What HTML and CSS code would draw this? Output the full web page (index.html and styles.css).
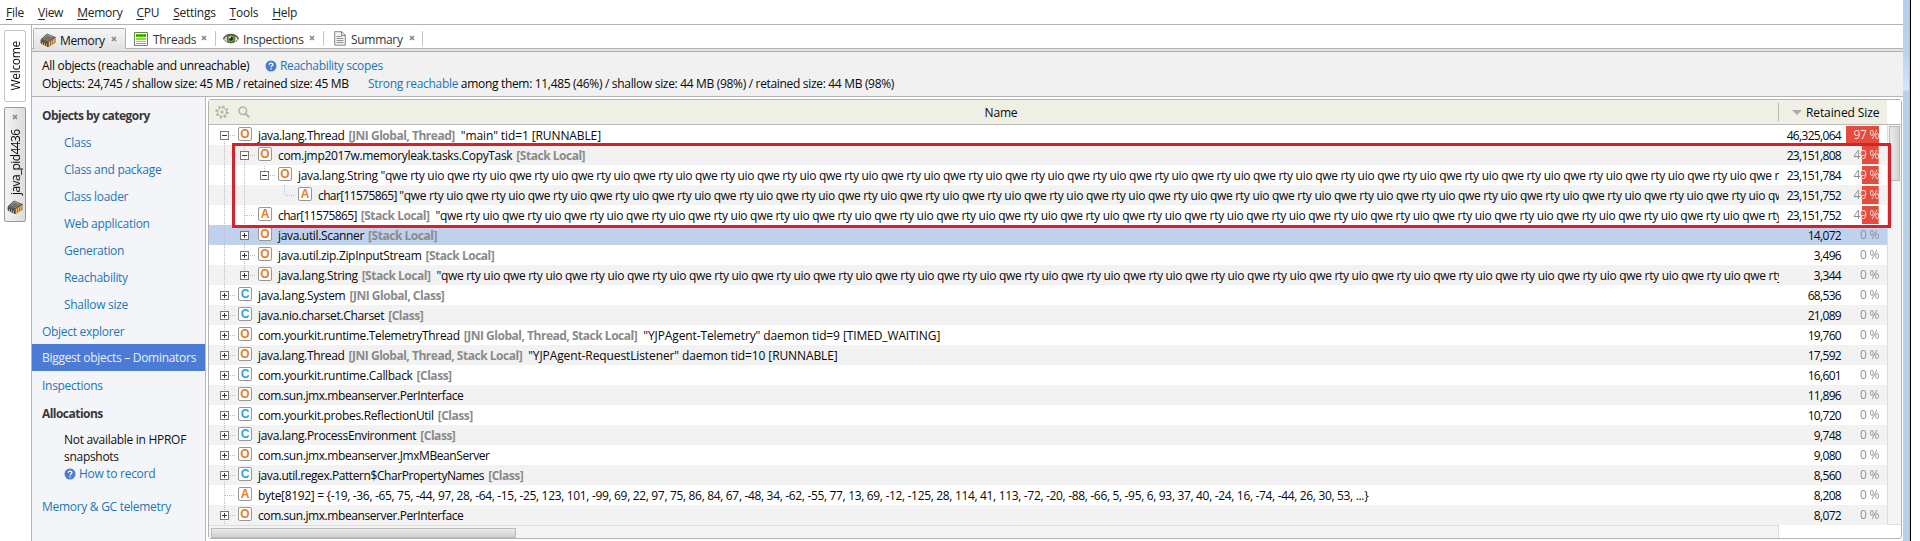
FILE: index.html
```html
<!DOCTYPE html>
<html lang="en">
<head>
<meta charset="utf-8">
<title>Memory snapshot</title>
<link rel="stylesheet" href="styles.css">
</head>
<body>
<svg class="defs" width="0" height="0">
  <symbol id="chip" viewBox="0 0 16 16">
    <path d="M.5 8 7 2l8 3.500.5 4-7.500 5.500L.5 11z" fill="#6b6865"/>
    <path d="M1 7.500 7 2l8.500 3.500L8 10z" fill="#77736f" stroke="#4a4744" stroke-width=".7"/>
    <path d="M4.500 5.500 7.500 3l5 2" fill="none" stroke="#a5a19c" stroke-width="1"/>
    <path d="M8 10l7.500-4.500v5L8.500 15z" fill="#8a5a2a"/>
    <path d="M9.500 9.500v4.500M11.500 8.500v4.200M13.400 7.300v4.200M15 6.300v3.700" stroke="#f0b96a" stroke-width="1.200"/>
    <path d="M1 8.500 8 11v4L1 11.500z" fill="#4c4743"/>
    <path d="M2.500 10v2.300M4.500 10.700v2.600M6.500 11.500v2.600" stroke="#e0a050" stroke-width="1"/>
  </symbol>
  <symbol id="cross" viewBox="0 0 6 6"><path d="M1 1 5 5M5 1 1 5" stroke="#8a8a8a" stroke-width="1.700"/></symbol>
  <symbol id="help" viewBox="0 0 12 12">
    <circle cx="6" cy="6" r="5.500" fill="#4c7bd3"/>
    <path d="M4.200 4.700C4.200 2.500 7.900 2.500 7.900 4.600 7.900 5.900 6.100 5.800 6.100 7.300M6.100 8.200V9.500" fill="none" stroke="#fff" stroke-width="1.300"/>
  </symbol>
</svg>
<div class="app">
  <nav class="menu"><span><u>F</u>ile</span><span><u>V</u>iew</span><span><u>M</u>emory</span><span><u>C</u>PU</span><span><u>S</u>ettings</span><span><u>T</u>ools</span><span><u>H</u>elp</span></nav>
  <div class="work">
    <div class="rail">
      <div class="vtab welcome"><span>Welcome</span></div>
      <div class="vtab current"><svg class="x"><use href="#cross"/></svg><span>java_pid4436</span><svg class="chip"><use href="#chip"/></svg></div>
    </div>
    <main class="main">
      <div class="tabs">
        <div class="tab active"><svg width="16" height="16"><use href="#chip"/></svg><span>Memory</span><svg class="x"><use href="#cross"/></svg></div>
        <div class="tab threads">
          <svg width="14" height="14" viewBox="0 0 14 14"><path fill="#fff" stroke="#6f7f62" d="M.5.5h13v13H.5z"/><path fill="#52c800" d="M2 2h10v3H2z"/><path fill="#8fe02a" d="M2 6h10v2H2zM2 9h10v1H2z"/><path fill="#5fc916" d="M2 11h10v1H2z"/><path stroke="#2f8f00" stroke-dasharray="3 1" d="M2 3.500h10"/></svg>
          <span>Threads</span><svg class="x"><use href="#cross"/></svg></div>
        <div class="tab inspections">
          <svg width="16" height="14" viewBox="0 0 16 14"><path d="M.5 7C4 1.500 12 1.500 15.500 7 12 12 4 12 .5 7z" fill="#eef0ec" stroke="#66705c"/><path d="M.5 6.500C4 1 12 1 15.500 6.500" fill="none" stroke="#4f5a48" stroke-width="1.400"/><circle cx="8" cy="6.800" r="4" fill="#7a9a4e" stroke="#4b6431"/><circle cx="8" cy="6.800" r="2" fill="#1d2a14"/><circle cx="7" cy="5.500" r=".9" fill="#fff"/></svg>
          <span>Inspections</span><svg class="x"><use href="#cross"/></svg></div>
        <div class="tab summary">
          <svg width="12" height="15" viewBox="0 0 12 15"><path d="M.7.7h7.100l3.500 3.500v10H.7z" fill="#f3f3f3" stroke="#858585"/><path d="M7.500.7v3.800h3.800" fill="none" stroke="#858585"/><path d="M2.500 5.500h5M2.500 7.500h7M2.500 9.500h7M2.500 11.500h7" stroke="#929292"/></svg>
          <span>Summary</span><svg class="x"><use href="#cross"/></svg></div>
      </div>
      <div class="info">
        <div class="line"><span class="l1">All objects (reachable and unreachable)</span><svg class="help"><use href="#help"/></svg><a>Reachability scopes</a></div>
        <div class="line"><span class="l2">Objects: 24,745 / shallow size: 45 MB / retained size: 45 MB</span><span class="l3"><a>Strong reachable</a> among them: 11,485 (46%) / shallow size: 44 MB (98%) / retained size: 44 MB (98%)</span></div>
      </div>
      <div class="content">
        <aside class="side">
          <b>Objects by category</b>
          <a class="sub">Class</a><a class="sub">Class and package</a><a class="sub">Class loader</a><a class="sub">Web application</a><a class="sub">Generation</a><a class="sub">Reachability</a><a class="sub">Shallow size</a>
          <a class="explorer">Object explorer</a>
          <a class="selected">Biggest objects – Dominators</a>
          <a class="insp">Inspections</a>
          <b>Allocations</b>
          <p>Not available in HPROF snapshots</p>
          <a class="record"><svg class="help"><use href="#help"/></svg>How to record</a>
          <a class="gc">Memory &amp; GC telemetry</a>
        </aside>
        <section class="panel">
          <header class="thead">
            <svg class="gear" width="14" height="14" viewBox="0 0 14 14"><g fill="none" stroke="#aaa9a0"><circle cx="7" cy="7" r="4.400"/><circle cx="7" cy="7" r="5.800" stroke-width="1.600" stroke-dasharray="2 2.555"/><circle cx="7" cy="7" r="1.200"/></g></svg>
            <svg class="search" width="12" height="12" viewBox="0 0 12 12"><g fill="none" stroke="#b3b2aa"><circle cx="4.800" cy="4.800" r="3.800" stroke-width="1.500"/><path d="m7.600 7.600 3.600 3.600" stroke-width="2"/></g></svg>
            <span class="hname">Name</span>
            <span class="hsize"><i></i><span>Retained Size</span></span>
          </header>
          <div class="tbody"><div class="rows" id="rows"></div><div class="vscroll"><div class="vthumb"></div></div></div>
          <div class="hscroll"><div class="htrack"><div class="hthumb"></div></div></div>
          <div class="mark"></div>
        </section>
      </div>
    </main>
  </div>
</div>
<div class="edge"></div>
<script src="rows.js"></script>
</body>
</html>
```

FILE: styles.css
```css
* { box-sizing: border-box; }
body {
  margin: 0; width: 1920px; height: 541px; overflow: hidden; display: flex;
  background: #fff; color: #080808;
  font: 12px/20px "Open Sans", "Noto Sans", sans-serif;
  letter-spacing: -.33px; white-space: nowrap;
}
.defs { position: absolute; }
svg { display: block; flex: none; }
a { color: #1b75bc; }
.app { width: 1903px; display: flex; flex-direction: column; }
.edge {
  width: 8px; border-right: 1px solid #000;
  background: linear-gradient(90deg, transparent 6px, #6fdcf0 6px), linear-gradient(#b4cfe9, #b8d3ec 50px, #d5e6f6 90px, #b9d0ea 91px);
}
.menu { height: 25px; border-bottom: 1px solid #b4b4b4; padding: 3px 0 0 6px; display: flex; gap: 14px; color: #222; letter-spacing: -.26px; }
.menu u { text-underline-offset: 2px; }
.work { flex: 1; display: flex; min-height: 0; }

/* vertical snapshot tabs */
.rail { width: 31px; padding: 5px 0 0 4px; display: flex; flex-direction: column; gap: 5px; }
.vtab { width: 22px; border: 1px solid #c6c6c6; border-radius: 2px; display: flex; flex-direction: column; align-items: center; }
.vtab span { writing-mode: vertical-rl; transform: rotate(180deg); line-height: 20px; padding-right: 2px; }
.welcome { height: 72px; justify-content: center; letter-spacing: -.3px; }
.current { height: 115px; padding-top: 6px; background: linear-gradient(90deg, #f4f4f4, #dcdcdc); border-color: #999; letter-spacing: -.6px; }
.current span { height: 68px; margin: 7px 0 4px; }
.x { width: 6px; height: 6px; }
.chip { width: 16px; height: 16px; }

.main { flex: 1; min-width: 0; border-left: 1px solid #b4b4b4; display: flex; flex-direction: column; }
.tabs { height: 27px; padding: 3px 0 0 1px; display: flex; background: linear-gradient(#fff 23px, #b5b5b5 23px, #b5b5b5 24px, #e2e2e2 24px, #e2e2e2 26px, #b0b0b0 26px); }
.tab { height: 20px; display: flex; align-items: center; color: #333; letter-spacing: -.3px; }
.tab .x { margin-top: -2px; }
.tab span { padding-top: 2px; }
.active { width: 93px; height: 21px; border: 1px solid #b0b0b0; border-bottom: 0; border-radius: 2px 2px 0 0; padding: 1px 0 0 6px; background: linear-gradient(#f6f6f6, #e2e2e2); color: #111; }
.active span { width: 55px; padding-left: 4px; letter-spacing: -.36px; }
.tab:not(.active) { border-right: 1px solid #c4c4c4; margin-top: 3px; height: 15px; }
.threads { width: 90px; padding-left: 8px; }
.threads span { width: 53px; padding-left: 5px; }
.inspections { width: 108px; padding-left: 7px; }
.inspections span { width: 70px; padding-left: 4px; }
.summary { width: 99px; padding-left: 10px; }
.summary span { width: 63px; padding-left: 5px; }

.info { height: 45px; padding: 5px 0 0 10px; background: #f1f1f1; border-bottom: 1px solid #b4b4b4; line-height: 18px; letter-spacing: -.32px; }
.line { display: flex; align-items: center; height: 18px; }
.l1 { width: 223px; }
.l2 { width: 326px; letter-spacing: -.36px; }
.help { width: 12px; height: 12px; margin-right: 3px; }

.content { flex: 1; min-height: 0; display: flex; }
.side { width: 174px; padding-top: 5px; background: #f4f5f9; border-right: 1px solid #b9b9b9; display: flex; flex-direction: column; line-height: 27px; letter-spacing: -.29px; }
.side > * { padding-left: 10px; height: 27px; flex: none; }
.side b { color: #383838; letter-spacing: -.54px; }
.side .sub { padding-left: 32px; }
.side .explorer { height: 26px; line-height: 27px; }
.side .selected { background: #4c7bd6; color: #e9f0fc; }
.side .insp { margin: 1px 0; }
.side b + p { margin: 5px 0 0; }
.side p { padding-left: 32px; height: 33px; line-height: 16.500px; width: 165px; white-space: normal; color: #111; }
.side .record { display: flex; align-items: center; height: 17px; padding-left: 32px; }
.side .gc { margin-top: 11px; }

/* object table */
.panel { position: relative; width: 1694px; height: 440px; margin: 2px 0 0 2px; border: 1px solid #b4b4b4; border-radius: 3px; display: flex; flex-direction: column; }
.thead { height: 25px; display: flex; align-items: center; border-bottom: 1px solid #b9b9b9; background: linear-gradient(90deg, #f0efe3 1678px, #fff 1678px); }
.gear { margin-left: 6px; }
.search { margin-left: 9px; }
.hname { flex: 1; text-align: center; padding: 2px 26px 0 0; letter-spacing: -.2px; }
.hsize { width: 123px; height: 18px; line-height: 18px; border-left: 1px solid #b5b5b5; display: flex; align-items: center; padding-left: 13px; letter-spacing: -.1px; }
.hsize span { padding-top: 2px; }
.hsize i { border: 5px solid transparent; border-top-color: #aaa; border-bottom: 0; margin-right: 4px; }
.tbody { display: flex; height: 400px; }
.rows { width: 1678px; }
.row { display: flex; height: 20px; }
.row:nth-child(even) { background: #f2f2f2; }
.row.sel { background: #c0d1ee; }
.name { width: 1570px; height: 20px; overflow: hidden; display: flex; align-items: center; padding-left: 5px; white-space: pre; }
.name b { color: #8a8a8a; letter-spacing: -.48px; margin-left: 4px; }
.label, .name b, .str { padding-top: 2px; }
.label.tight { letter-spacing: -.42px; }
.label.digits { letter-spacing: -.62px; }
.cell { width: 20px; height: 20px; flex: none; display: flex; align-items: center; justify-content: center; background: repeating-linear-gradient(#bdbdbd 0 1px, transparent 1px 2px) 10px 0 / 1px 20px no-repeat; }
.cell.none { background: none; }
.cell.start { background-position: 10px 10px; }
.cell.end { background-size: 1px 10px; }
.cell.both { background-size: 1px 9px; background-position: 10px -3px; }
.stub { width: 5px; height: 1px; flex: none; margin: 0 0 0 -4px; background: repeating-linear-gradient(90deg, #bdbdbd 0 1px, transparent 1px 2px); }
.stub.long { width: 10px; margin-left: -9px; }
.box { width: 9px; height: 9px; border: 1px solid #777; margin-left: 1px; background: linear-gradient(#333, #333) 1px 3px / 5px 1px no-repeat #fff; }
.box.plus { background: linear-gradient(#333, #333) 1px 3px / 5px 1px no-repeat, linear-gradient(#333, #333) 3px 1px / 1px 5px no-repeat #fff; }
.kind { width: 14px; height: 14px; flex: none; margin: -2px 6px 0 3px; border: 1px solid #979797; border-radius: 2px; background: #fff; font: bold 12px/12px "Liberation Sans", sans-serif; display: flex; justify-content: center; letter-spacing: 0; color: #e8801a; }
.kind.C { color: #28a4e0; }
.str { letter-spacing: -.11px; }
.qwe { letter-spacing: -.293px; }
.gap { margin-left: 6px; }
.size { width: 62px; text-align: right; letter-spacing: -.68px; line-height: 21px; }
.pct { width: 38px; height: 18px; margin-top: 1px; display: flex; justify-content: flex-end; background: linear-gradient(#e64c3c, #e64c3c) right / calc(var(--share) * 34px) 18px no-repeat; }
.pct span { width: 38px; text-align: right; line-height: 17px; letter-spacing: -.3px; color: transparent; background: linear-gradient(270deg, #fff0ee calc(var(--share) * 34px), #8a8a8a calc(var(--share) * 34px)); background-clip: text; -webkit-background-clip: text; }
.vscroll { width: 14px; border-left: 1px solid #ddd; border-bottom: 1px solid #ddd; background: #f4f4f4; padding: 1px 0 0 1px; }
.vthumb { width: 11px; height: 55px; border: 1px solid #bbb; background: linear-gradient(90deg, #ececec, #d2d2d2); }
.hscroll { flex: 1; }
.htrack { width: 1570px; height: 13px; padding: 2px 0 0 2px; border-top: 1px solid #ddd; border-right: 1px solid #ddd; background: #f4f4f4; }
.hthumb { width: 305px; height: 10px; border: 1px solid #bbb; background: linear-gradient(#ececec, #d0d0d0); }
.mark { position: absolute; left: 23px; top: 43px; width: 1659px; height: 85px; border: 3px solid #d8222b; }
```

FILE: rows.js
```js
const qwe = n => '"' + 'qwe rty uio '.repeat(n) + 'qwe rty';
// [depth, tree guides, expander, kind, name, roots, details, size, percent, label class]
const data = [
  [0, 's', '-', 'O', 'java.lang.Thread', '[JNI Global, Thread]', '"main" tid=1 [RUNNABLE]', '46,325,064', 97],
  [1, '||', '-', 'O', 'com.jmp2017w.memoryleak.tasks.CopyTask', '[Stack Local]', '', '23,151,808', 49],
  [2, '||b', '-', 'O', 'java.lang.String', '', qwe(22), '23,151,784', 49],
  [3, '||ne', '', 'A', 'char[11575865]', '', qwe(22), '23,151,752', 49, 'digits'],
  [1, '||', '', 'A', 'char[11575865]', '[Stack Local]', qwe(21), '23,151,752', 49, 'digits'],
  [1, '||', '+', 'O', 'java.util.Scanner', '[Stack Local]', '', '14,072', 0],
  [1, '||', '+', 'O', 'java.util.zip.ZipInputStream', '[Stack Local]', '', '3,496', 0],
  [1, '|e', '+', 'O', 'java.lang.String', '[Stack Local]', qwe(21), '3,344', 0],
  [0, '|', '+', 'C', 'java.lang.System', '[JNI Global, Class]', '', '68,536', 0],
  [0, '|', '+', 'C', 'java.nio.charset.Charset', '[Class]', '', '21,089', 0],
  [0, '|', '+', 'O', 'com.yourkit.runtime.TelemetryThread', '[JNI Global, Thread, Stack Local]', '"YJPAgent-Telemetry" daemon tid=9 [TIMED_WAITING]', '19,760', 0],
  [0, '|', '+', 'O', 'java.lang.Thread', '[JNI Global, Thread, Stack Local]', '"YJPAgent-RequestListener" daemon tid=10 [RUNNABLE]', '17,592', 0],
  [0, '|', '+', 'C', 'com.yourkit.runtime.Callback', '[Class]', '', '16,601', 0],
  [0, '|', '+', 'O', 'com.sun.jmx.mbeanserver.PerInterface', '', '', '11,896', 0, 'tight'],
  [0, '|', '+', 'C', 'com.yourkit.probes.ReflectionUtil', '[Class]', '', '10,720', 0],
  [0, '|', '+', 'C', 'java.lang.ProcessEnvironment', '[Class]', '', '9,748', 0],
  [0, '|', '+', 'O', 'com.sun.jmx.mbeanserver.JmxMBeanServer', '', '', '9,080', 0, 'tight'],
  [0, '|', '+', 'C', 'java.util.regex.Pattern$CharPropertyNames', '[Class]', '', '8,560', 0, 'tight'],
  [0, '|', '', 'A', 'byte[8192] = {-19, -36, -65, 75, -44, 97, 28, -64, -15, -25, 123, 101, -99, 69, 22, 97, 75, 86, 84, 67, -48, 34, -62, -55, 77, 13, 69, -12, -125, 28, 114, 41, 113, -72, -20, -88, -66, 5, -95, 6, 93, 37, 40, -24, 16, -74, -44, 26, 30, 53, ...}', '', '', '8,208', 0],
  [0, '|', '+', 'O', 'com.sun.jmx.mbeanserver.PerInterface', '', '', '8,072', 0, 'tight'],
];
const guide = { '|': '', s: 'start', e: 'end', b: 'both', n: 'none' };
document.getElementById('rows').innerHTML = data.map(([depth, guides, exp, kind, name, roots, details, size, pct, fit = ''], i) => {
  const cells = [...guides].map((g, d) =>
    `<span class="cell ${guide[g]}">${d === depth && exp ? `<span class="box ${exp === '+' ? 'plus' : ''}"></span>` : ''}</span>`).join('');
  return `<div class="row ${i === 5 ? 'sel' : ''}"><div class="name">${cells}<span class="stub ${exp ? '' : 'long'}"></span>` +
    `<span class="kind ${kind}">${kind}</span><span class="label ${fit}">${name}${details && !roots ? ' ' : ''}</span>${roots ? `<b>${roots}</b>` : ''}` +
    `${details ? `<span class="str ${details.startsWith('"qwe') ? 'qwe' : ''} ${roots ? 'gap' : ''}">${details}</span>` : ''}</div>` +
    `<div class="size">${size}</div><div class="pct" style="--share:${pct / 100}"><span>${pct} %</span></div></div>`;
}).join('');
```
